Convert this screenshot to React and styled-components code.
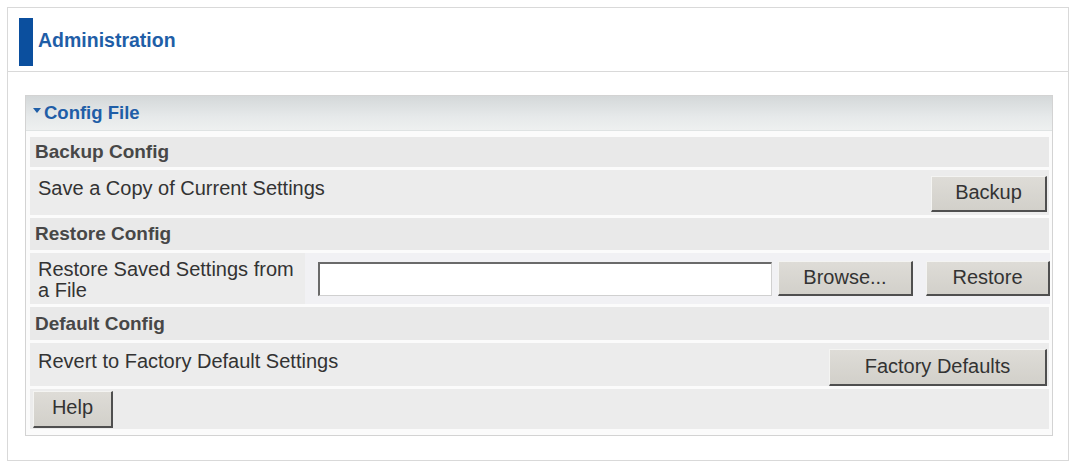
import styled, { createGlobalStyle } from 'styled-components'

const GlobalStyle = createGlobalStyle`
  html, body {
    margin: 0;
    padding: 0;
    background: #ffffff;
  }
  body {
    font-family: "Liberation Sans", Arial, sans-serif;
  }
`

const Frame = styled.div`
  margin: 7px 7px 0 7px;
  height: 454px;
  box-sizing: border-box;
  border: 1px solid #d9d9d9;
  background: #fff;
`

const Header = styled.header`
  height: 64px;
  box-sizing: border-box;
  padding: 10px 0 6px 11px;
  display: flex;
  align-items: center;
  border-bottom: 1px solid #d9d9d9;
`

const Bar = styled.span`
  width: 14px;
  height: 48px;
  background: #0b4f9e;
  margin-right: 5px;
`

const Title = styled.h1`
  margin: 0 0 2px 0;
  font-size: 19.5px;
  font-weight: bold;
  color: #1f5ea7;
`

const Body = styled.div`
  padding: 23px 15px 0 17px;
`

const Panel = styled.section`
  border: 1px solid #d3d3d3;
  background: #fbfbfb;
`

const PanelHead = styled.div`
  height: 35px;
  box-sizing: border-box;
  display: flex;
  align-items: center;
  padding-left: 7px;
  background: linear-gradient(#d4d8d9, #e6e9ea 60%, #eef0f0);
  border-bottom: 1px solid #dfe3e3;
  color: #1f5ea7;
  font-size: 18.5px;
  font-weight: bold;
`

const Arrow = styled.span`
  width: 0;
  height: 0;
  border-left: 4px solid transparent;
  border-right: 4px solid transparent;
  border-top: 5px solid #1f5ea7;
  margin: 0 3px 6px 0;
`

const Rows = styled.div`
  display: flex;
  flex-direction: column;
  gap: 3px;
  padding: 6px 3px 6px 4px;
`

const SectionRow = styled.div`
  height: ${p => p.h}px;
  display: flex;
  align-items: center;
  padding-left: 5px;
  background: #e9e9e9;
  color: #474747;
  font-size: 19px;
  font-weight: bold;
`

const Row = styled.div`
  height: ${p => p.h}px;
  box-sizing: border-box;
  display: flex;
  align-items: center;
  background: #ececec;
  padding-right: 2px;
`

const Label = styled.div`
  align-self: flex-start;
  padding: ${p => p.pt}px 0 0 8px;
  width: ${p => (p.w ? `${p.w}px` : 'auto')};
  flex: ${p => (p.w ? 'none' : '1')};
  box-sizing: border-box;
  color: #333;
  font-size: 20px;
  line-height: 21px;
`

const Controls = styled.div`
  flex: 1;
  align-self: stretch;
  display: flex;
  align-items: center;
  justify-content: flex-end;
  background: ${p => (p.light ? '#f1f1f4' : 'transparent')};
  padding-left: ${p => (p.light ? 13 : 0)}px;
`

const Button = styled.button`
  width: ${p => p.w}px;
  height: ${p => p.h || 36}px;
  margin-left: ${p => p.ml || 0}px;
  margin-top: ${p => p.mt || 0}px;
  box-sizing: border-box;
  background: linear-gradient(#dedcd7, #d2d0ca);
  border-style: solid;
  border-width: 1px 2px 2px 1px;
  border-color: #f4f4f2 #4f4f4f #4f4f4f #f4f4f2;
  color: #333;
  font-family: "Liberation Sans", Arial, sans-serif;
  font-size: 20px;
  padding: 0 0 2px 0;
  cursor: pointer;
`

const FileInput = styled.input`
  width: 454px;
  height: 34px;
  box-sizing: border-box;
  margin-right: 6px;
  border-style: solid;
  border-width: 2px 1px 1px 2px;
  border-color: #6a6a6a #d0d0d0 #d0d0d0 #6a6a6a;
  background: #fff;
`

const HelpRow = styled.div`
  height: 40px;
  display: flex;
  align-items: center;
  background: #ececec;
  padding-left: 3px;
`

export default function App() {
  return (
    <>
      <GlobalStyle />
      <Frame>
        <Header>
          <Bar />
          <Title>Administration</Title>
        </Header>
        <Body>
          <Panel>
            <PanelHead>
              <Arrow />
              Config File
            </PanelHead>
            <Rows>
              <SectionRow h={30}>Backup Config</SectionRow>
              <Row h={45}>
                <Label pt={8}>Save a Copy of Current Settings</Label>
                <Button w={116} mt={3}>Backup</Button>
              </Row>
              <SectionRow h={32}>Restore Config</SectionRow>
              <Row h={51}>
                <Label pt={6} w={275}>Restore Saved Settings from a File</Label>
                <Controls light>
                  <FileInput type="text" />
                  <Button w={135} h={35}>Browse...</Button>
                  <Button w={124} h={35} ml={13}>Restore</Button>
                </Controls>
              </Row>
              <SectionRow h={33}>Default Config</SectionRow>
              <Row h={43}>
                <Label pt={8}>Revert to Factory Default Settings</Label>
                <Button w={218} h={37} mt={6}>Factory Defaults</Button>
              </Row>
              <HelpRow>
                <Button w={80} h={37}>Help</Button>
              </HelpRow>
            </Rows>
          </Panel>
        </Body>
      </Frame>
    </>
  )
}
